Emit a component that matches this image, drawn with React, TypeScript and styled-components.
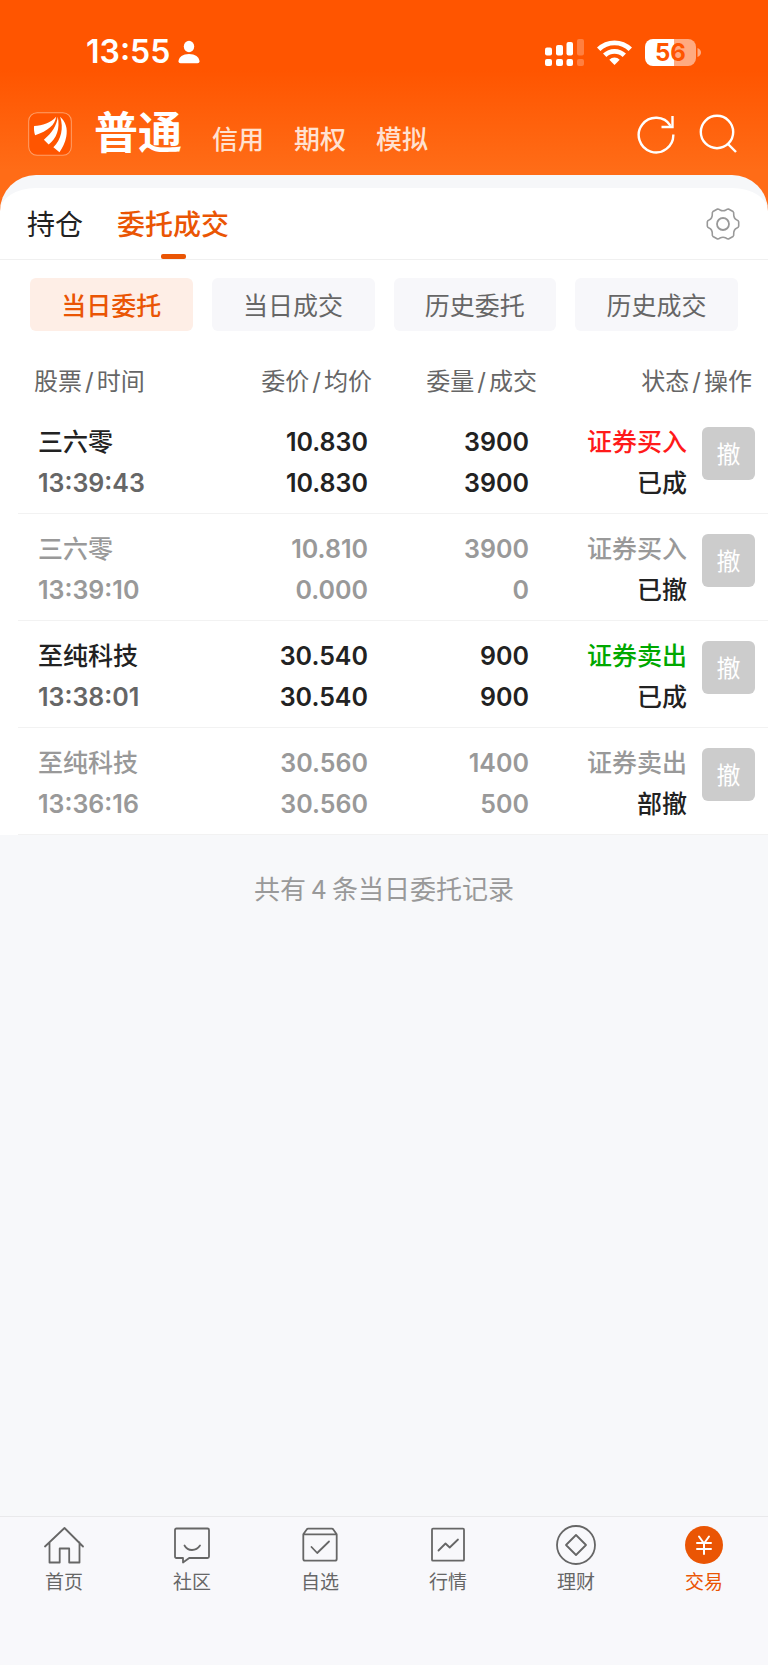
import React from 'react';
import styled, { createGlobalStyle } from 'styled-components';

const BRAND = '#ea5504';

const GlobalStyle = createGlobalStyle`
  *, *::before, *::after { box-sizing: border-box; }
  body {
    margin: 0;
    background: #f7f8fa;
    color: #222;
    font-family: Inter, "Noto Sans CJK SC", sans-serif;
  }
  button {
    margin: 0;
    padding: 0;
    border: 0;
    background: none;
    color: inherit;
    font: inherit;
    cursor: pointer;
  }
  a { color: inherit; text-decoration: none; }
  svg { display: block; }
`;

const Page = styled.div`
  display: flex;
  flex-direction: column;
  min-height: 100vh;
`;

const Top = styled.header`
  background: linear-gradient(#ff5500 70px, #ff6c17 170px);
  color: #fff;
  height: 212px;
`;

const StatusBar = styled.div`
  display: flex;
  align-items: center;
  height: 104px;
  padding: 0 67px 0 86px;
`;

const Clock = styled.time`
  font-size: 32px;
  font-weight: 600;
  line-height: 40px;
  margin-right: 8px;
`;

const StatusIcons = styled.div`
  display: flex;
  align-items: center;
  gap: 13px;
  margin-left: auto;
`;

const Battery = styled.div`
  display: flex;
  align-items: center;
  gap: 1px;
`;

const BatteryBody = styled.span`
  width: 51px;
  height: 27px;
  border-radius: 8px;
  background: linear-gradient(90deg, #fff 56%, #ffaa80 56%);
  color: #ff5500;
  font-size: 24px;
  font-weight: 700;
  line-height: 28px;
  text-align: center;
`;

const AccountBar = styled.div`
  display: flex;
  align-items: center;
  height: 60px;
  padding: 0 30px 0 28px;
`;

const AccountTabs = styled.nav`
  display: flex;
  align-items: baseline;
  gap: 30px;
  margin-left: 22px;
  padding-top: 5px;
`;

const AccountTab = styled.button<{ $active?: boolean }>`
  font-size: ${(p) => (p.$active ? 44 : 26)}px;
  font-weight: ${(p) => (p.$active ? 700 : 500)};
  line-height: 60px;
  color: ${(p) => (p.$active ? '#fff' : '#ffe1d1')};
`;

const AccountActions = styled.div`
  display: flex;
  gap: 22px;
  margin-left: auto;
`;

const Sheet = styled.main`
  position: relative;
  margin-top: -37px;
  border-radius: 36px 36px 0 0;
  border-top: 13px solid #f6f7f9;
  background: #fff;
`;

const TabBar = styled.div`
  display: flex;
  align-items: center;
  gap: 34px;
  height: 72px;
  padding: 0 28px 0 27px;
  border-bottom: 1px solid #f0f0f0;
`;

const Tab = styled.button<{ $active?: boolean }>`
  position: relative;
  height: 71px;
  padding-bottom: 2px;
  font-size: 28px;
  font-weight: ${(p) => (p.$active ? 500 : 400)};
  color: ${(p) => (p.$active ? BRAND : '#222')};

  &::after {
    content: '';
    display: ${(p) => (p.$active ? 'block' : 'none')};
    position: absolute;
    bottom: 0;
    left: 50%;
    width: 25px;
    height: 5px;
    margin-left: -12px;
    border-radius: 2px;
    background: ${BRAND};
  }
`;

const SettingsButton = styled.button`
  margin-left: auto;
`;

const Filters = styled.div`
  display: grid;
  grid-template-columns: repeat(4, 1fr);
  gap: 19px;
  padding: 18px 30px 25px;
`;

const Filter = styled.button<{ $active?: boolean }>`
  height: 53px;
  padding-bottom: 2px;
  border-radius: 6px;
  font-size: 25px;
  font-weight: ${(p) => (p.$active ? 500 : 400)};
  background: ${(p) => (p.$active ? '#feeee6' : '#f7f7fa')};
  color: ${(p) => (p.$active ? BRAND : '#666')};
`;

const OrderTable = styled.table`
  width: calc(100% - 18px);
  margin-left: 18px;
  table-layout: fixed;
  border-collapse: separate;
  border-spacing: 0;
`;

const DataCol = styled.col`
  width: 22%;
`;

const ActionCol = styled.col`
  width: 66px;
`;

const HeadCell = styled.th<{ $left?: boolean; $last?: boolean }>`
  height: 51px;
  padding: 0 ${(p) => (p.$last ? 16 : 0)}px 0 ${(p) => (p.$left ? 16 : 0)}px;
  font-size: 24px;
  font-weight: 400;
  line-height: 51px;
  text-align: ${(p) => (p.$left ? 'left' : 'right')};
  color: #666;
  white-space: nowrap;
`;

const Slash = styled.span`
  margin: 0 3px;
`;

const Cell = styled.td<{ $muted?: boolean; $left?: boolean; $inset?: number }>`
  padding: 15px ${(p) => p.$inset ?? 0}px 9px ${(p) => (p.$left ? 20 : 0)}px;
  border-bottom: 1px solid #f2f2f2;
  font-size: 25px;
  font-weight: 600;
  line-height: 41px;
  text-align: ${(p) => (p.$left ? 'left' : 'right')};
  vertical-align: top;
  white-space: nowrap;
  color: ${(p) => (p.$muted ? '#999' : '#222')};
`;

const Line = styled.div<{ $color?: string; $cjk?: boolean }>`
  height: 41px;
  color: ${(p) => p.$color ?? 'inherit'};
  font-weight: ${(p) => (p.$cjk ? 500 : 'inherit')};
`;

const ActionCell = styled.td`
  padding: 20px 0 0;
  border-bottom: 1px solid #f2f2f2;
  vertical-align: top;
`;

const CancelButton = styled.button`
  display: block;
  width: 53px;
  height: 53px;
  padding-bottom: 2px;
  border-radius: 6px;
  background: #ccc;
  color: #fff;
  font-size: 24px;
`;

const Summary = styled.p`
  margin: 0;
  padding: 33px 0;
  font-family: "Noto Sans CJK SC", sans-serif;
  font-size: 26px;
  line-height: 40px;
  text-align: center;
  color: #999;
`;

const BottomNav = styled.nav`
  display: grid;
  grid-template-columns: repeat(6, 1fr);
  height: 149px;
  margin-top: auto;
  padding-top: 8px;
  border-top: 1px solid #e9e9eb;
  background: #f8f8fb;
`;

const NavItem = styled.a<{ $active?: boolean }>`
  display: flex;
  flex-direction: column;
  align-items: center;
  gap: 6px;
  font-size: 19px;
  line-height: 24px;
  color: ${(p) => (p.$active ? BRAND : '#666')};
`;

const PersonIcon = () => (
  <svg width="22" height="24" viewBox="0 0 22 24" fill="#fff" aria-hidden="true">
    <ellipse cx="11" cy="6.5" rx="5.2" ry="5.7" />
    <path d="M0.5 21.5C0.5 17 5 14 11 14S21.500 17 21.500 21.500Q21.500 23.300 19.500 23.300H2.500Q0.500 23.300 0.500 21.500Z" />
  </svg>
);

const SignalIcon = () => (
  <svg width="39" height="27" viewBox="0 0 39 27" fill="#fff" aria-label="信号">
    <rect x="0" y="8.500" width="7" height="8" rx="2" />
    <rect x="11" y="6" width="7" height="10.500" rx="2" />
    <rect x="21.500" y="3" width="6.500" height="13.500" rx="2" />
    <rect x="32" y="0" width="7" height="16.500" rx="2" opacity=".25" />
    <rect x="0" y="20" width="7" height="7" rx="2" />
    <rect x="11" y="20" width="7" height="7" rx="2" />
    <rect x="21.500" y="20" width="6.500" height="7" rx="2" />
    <rect x="32" y="20" width="7" height="7" rx="2" opacity=".25" />
  </svg>
);

const WifiIcon = () => (
  <svg width="35" height="25" viewBox="0 0 35 25" aria-label="无线网络">
    <g fill="none" stroke="#fff" strokeWidth="4.800">
      <path d="M1.700 9.300A22.500 22.500 0 0 1 33.300 9.300" />
      <path d="M7.700 15.300A14 14 0 0 1 27.300 15.300" />
    </g>
    <path d="M17.500 25L12.300 19.700A7.500 7.500 0 0 1 22.700 19.700Z" fill="#fff" />
  </svg>
);

const BatteryTip = () => (
  <svg width="4" height="9" viewBox="0 0 4 9" fill="#ffaa80" aria-hidden="true">
    <path d="M0.500 0C2.500 0.600 4 2.300 4 4.500S2.500 8.400 0.500 9Z" />
  </svg>
);

const Logo = () => (
  <svg width="44" height="44" viewBox="-1 -1 130 130" aria-label="首页标志">
    <rect x="1" y="1" width="126" height="126" rx="25" fill="#ff5500" stroke="#ffa06a" strokeWidth="3" />
    <g fill="#fff">
      <path d="M17 40C42 39 66 31 82 13C80 36 58 55 20 68C17 58 16 49 17 40Z" />
      <path d="M87 13C84 39 70 60 46 81L60 95C84 77 94 48 87 13Z" />
      <path d="M94 13C110 27 117 48 112 72C109 89 101 105 92 118L74 103C97 81 105 46 94 13Z" />
    </g>
  </svg>
);

const RefreshIcon = () => (
  <svg width="40" height="40" viewBox="0 0 40 40" fill="none" stroke="#fff" strokeWidth="2.400" aria-hidden="true">
    <path d="M37.300 20.500A17.300 17.300 0 1 1 34.600 11.800" />
    <path d="M36.500 2V13H25.500" />
  </svg>
);

const SearchIcon = () => (
  <svg width="40" height="40" viewBox="0 0 40 40" fill="none" stroke="#fff" strokeWidth="2.400" aria-hidden="true">
    <circle cx="19" cy="18" r="16.200" />
    <path d="M30 30L38 38" />
  </svg>
);

const GearIcon = () => (
  <svg width="34" height="34" viewBox="0 0 34 34" fill="none" stroke="#999" strokeWidth="1.600" strokeLinejoin="round" aria-hidden="true">
    <path d="M11.500 2Q13 2 14 3Q17 4.600 20 3Q21 2 22.500 2L27 4.500Q28 5.500 27.700 7Q27.500 11.500 31 13Q32.500 13.500 32.700 14.800V19.200Q32.500 20.500 31 21Q27.500 22.500 27.700 27Q28 28.500 27 29.500L22.500 32Q21 32 20 31Q17 29.400 14 31Q13 32 11.500 32L7 29.500Q6 28.500 6.300 27Q6.500 22.500 3 21Q1.500 20.500 1.300 19.200V14.800Q1.500 13.500 3 13Q6.500 11.500 6.300 7Q6 5.500 7 4.500Z" />
    <circle cx="17" cy="17" r="6" strokeWidth="1.800" />
  </svg>
);

const NavIcon = ({ children }: { children: React.ReactNode }) => (
  <svg
    width="40"
    height="40"
    viewBox="0 0 40 40"
    fill="none"
    stroke="currentColor"
    strokeWidth="1.800"
    strokeLinecap="round"
    strokeLinejoin="round"
    aria-hidden="true"
  >
    {children}
  </svg>
);

const navItems: { label: string; icon: React.ReactNode; active?: boolean }[] = [
  {
    label: '首页',
    icon: <path d="M1 21.500L20.500 3L39 21.500M5.500 17.500V37.500H15.700V23.500H25.200V37.500H35.500V17.500" />,
  },
  {
    label: '社区',
    icon: (
      <>
        <path d="M4.500 3.500H35.500Q37 3.500 37 5V31.500Q37 33 35.500 33H17.200L11 37.500V33H4.500Q3 33 3 31.500V5Q3 3.500 4.500 3.500Z" />
        <path d="M12.500 20.500Q15 25 20 25T28 20.500" />
      </>
    ),
  },
  {
    label: '自选',
    icon: (
      <>
        <path d="M3.300 9.300H36.700V34Q36.700 35.700 35 35.700H5Q3.300 35.700 3.300 34ZM3.300 9.300L6.700 4.500Q7.200 3.700 8.200 3.700H31.800Q32.800 3.700 33.300 4.500L36.700 9.300" />
        <path d="M11.500 22L17.200 28L29 16.500" />
      </>
    ),
  },
  {
    label: '行情',
    icon: (
      <>
        <rect x="4" y="3.700" width="32" height="32" rx="1" />
        <path d="M10.500 25.500L17.500 18.500L21.700 22.500L30 14.500" />
      </>
    ),
  },
  {
    label: '理财',
    icon: (
      <>
        <circle cx="20" cy="20" r="19" />
        <path d="M20 10L30 20L20 30L10 20Z" />
      </>
    ),
  },
  {
    label: '交易',
    active: true,
    icon: (
      <>
        <circle cx="20" cy="20" r="19" fill={BRAND} stroke="none" />
        <path d="M15 11.500L20 18.500L25 11.500M20 18.500V29M13 18H27M13 24H27" stroke="#fff" strokeWidth="2" />
      </>
    ),
  },
];

interface Order {
  name: string;
  time: string;
  price: string;
  average: string;
  quantity: string;
  filled: string;
  side: '证券买入' | '证券卖出';
  status: string;
  muted?: boolean;
}

const orders: Order[] = [
  { name: '三六零', time: '13:39:43', price: '10.830', average: '10.830', quantity: '3900', filled: '3900', side: '证券买入', status: '已成' },
  { name: '三六零', time: '13:39:10', price: '10.810', average: '0.000', quantity: '3900', filled: '0', side: '证券买入', status: '已撤', muted: true },
  { name: '至纯科技', time: '13:38:01', price: '30.540', average: '30.540', quantity: '900', filled: '900', side: '证券卖出', status: '已成' },
  { name: '至纯科技', time: '13:36:16', price: '30.560', average: '30.560', quantity: '1400', filled: '500', side: '证券卖出', status: '部撤', muted: true },
];

const sideColor = (order: Order) => {
  if (order.muted) return '#999';
  return order.side === '证券买入' ? '#ff1a1a' : '#00a800';
};

const Heading = ({ first, second }: { first: string; second: string }) => (
  <>
    {first}
    <Slash>/</Slash>
    {second}
  </>
);

const OrderRow = ({ order }: { order: Order }) => (
  <tr>
    <Cell $left $muted={order.muted}>
      <Line $cjk>{order.name}</Line>
      <Line $color={order.muted ? '#999' : '#666'}>{order.time}</Line>
    </Cell>
    <Cell $inset={4} $muted={order.muted}>
      <Line>{order.price}</Line>
      <Line>{order.average}</Line>
    </Cell>
    <Cell $inset={8} $muted={order.muted}>
      <Line>{order.quantity}</Line>
      <Line>{order.filled}</Line>
    </Cell>
    <Cell $inset={15} $muted={order.muted}>
      <Line $cjk $color={sideColor(order)}>{order.side}</Line>
      <Line $cjk $color="#222">{order.status}</Line>
    </Cell>
    <ActionCell>
      <CancelButton type="button">撤</CancelButton>
    </ActionCell>
  </tr>
);

export default function App() {
  return (
    <Page>
      <GlobalStyle />
      <Top>
        <StatusBar>
          <Clock>13:55</Clock>
          <PersonIcon />
          <StatusIcons>
            <SignalIcon />
            <WifiIcon />
            <Battery>
              <BatteryBody>56</BatteryBody>
              <BatteryTip />
            </Battery>
          </StatusIcons>
        </StatusBar>
        <AccountBar>
          <Logo />
          <AccountTabs>
            <AccountTab type="button" $active>普通</AccountTab>
            <AccountTab type="button">信用</AccountTab>
            <AccountTab type="button">期权</AccountTab>
            <AccountTab type="button">模拟</AccountTab>
          </AccountTabs>
          <AccountActions>
            <button type="button" aria-label="刷新"><RefreshIcon /></button>
            <button type="button" aria-label="搜索"><SearchIcon /></button>
          </AccountActions>
        </AccountBar>
      </Top>

      <Sheet>
        <TabBar>
          <Tab type="button">持仓</Tab>
          <Tab type="button" $active>委托成交</Tab>
          <SettingsButton type="button" aria-label="设置"><GearIcon /></SettingsButton>
        </TabBar>
        <Filters>
          <Filter type="button" $active>当日委托</Filter>
          <Filter type="button">当日成交</Filter>
          <Filter type="button">历史委托</Filter>
          <Filter type="button">历史成交</Filter>
        </Filters>
        <OrderTable>
          <colgroup>
            <col />
            <DataCol />
            <DataCol />
            <DataCol />
            <ActionCol />
          </colgroup>
          <thead>
            <tr>
              <HeadCell $left><Heading first="股票" second="时间" /></HeadCell>
              <HeadCell><Heading first="委价" second="均价" /></HeadCell>
              <HeadCell><Heading first="委量" second="成交" /></HeadCell>
              <HeadCell $last colSpan={2}><Heading first="状态" second="操作" /></HeadCell>
            </tr>
          </thead>
          <tbody>
            {orders.map((order) => (
              <OrderRow key={order.time} order={order} />
            ))}
          </tbody>
        </OrderTable>
      </Sheet>
      <Summary>共有 {orders.length} 条当日委托记录</Summary>

      <BottomNav>
        {navItems.map((item) => (
          <NavItem key={item.label} href="#" $active={item.active}>
            <NavIcon>{item.icon}</NavIcon>
            {item.label}
          </NavItem>
        ))}
      </BottomNav>
    </Page>
  );
}
